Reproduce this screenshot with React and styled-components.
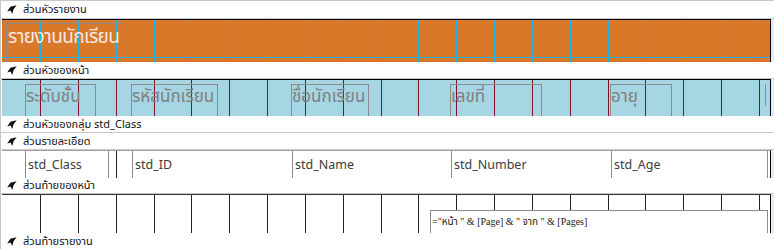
import React from "react";
import styled, { createGlobalStyle } from "styled-components";

const Global = createGlobalStyle`
  html, body { margin: 0; padding: 0; background: #ffffff; }
  #root { width: 774px; height: 249px; overflow: hidden; }
`;

const THAI = `"Noto Sans Thai", "Noto Sans", "DejaVu Sans", sans-serif`;

const Page = styled.div`
  width: 774px;
  height: 249px;
  box-sizing: border-box;
  border-top: 1px solid #c8c8c8;
  border-left: 1px solid #c8c8c8;
  display: flex;
  flex-direction: column;
  overflow: hidden;
  background: #fff;
`;

const Bar = styled.div`
  height: ${(p) => p.$h || 16}px;
  flex: none;
  display: flex;
  align-items: center;
  gap: 6px;
  padding-left: 6px;
  border-bottom: ${(p) => (p.$noLine ? "none" : "1px solid #c8c8c8")};
  font-family: ${THAI};
  font-size: 11px;
  color: #111;
  background: #fff;
  white-space: nowrap;
`;

const BandRow = styled.div`
  display: flex;
  flex: none;
  height: ${(p) => p.$h}px;
  padding-left: 1px;
  background: #fff;
`;

const Band = styled.div`
  position: relative;
  width: 769px;
  flex: none;
  box-sizing: border-box;
  border-top: 1px solid ${(p) => p.$top || "#000"};
  border-right: 1px solid #000;
  background: ${(p) => p.$bg};
  overflow: hidden;
`;

const Filler = styled.div`
  flex: 1;
  background: #e8ecf0;
`;

const VLine = styled.div`
  position: absolute;
  top: 0;
  bottom: 0;
  width: 1px;
  background: ${(p) => p.$c};
`;

const HLine = styled.div`
  position: absolute;
  left: 0;
  right: 0;
  height: 1px;
  background: ${(p) => p.$c};
`;

const xs = Array.from({ length: 20 }, (_, k) => Math.round(38 + 37.84 * k));

function Grid({ color, rows = [] }) {
  return (
    <>
      {xs.map((x) => (
        <VLine key={x} $c={color} style={{ left: x }} />
      ))}
      {rows.map((y) => (
        <HLine key={"h" + y} $c={color} style={{ top: y }} />
      ))}
    </>
  );
}

const Control = styled.div`
  position: absolute;
  box-sizing: border-box;
  white-space: nowrap;
`;

const TitleBox = styled(Control)`
  left: 4px;
  top: 3px;
  width: 118px;
  height: 60px;
  border: 1px solid #8a8a8a;
  font-family: ${THAI};
  font-size: 19px;
  letter-spacing: -0.6px;
  line-height: 27px;
  color: #f6e8e6;
  padding-left: 1px;
`;

const Label = styled(Control)`
  top: 4px;
  height: 50px;
  border: 1px solid #8c8c8c;
  font-family: ${THAI};
  font-size: 17px;
  line-height: 24px;
  color: #808080;
`;

const Field = styled(Control)`
  top: 0;
  bottom: 0;
  border-left: 1px solid #8c8c8c;
  border-right: ${(p) => (p.$closed ? "1px solid #8c8c8c" : "none")};
  background: #fff;
  font-family: "Noto Sans", "Open Sans", sans-serif;
  font-size: 12.5px;
  line-height: 27px;
  color: #3c3c3c;
  padding-left: 2px;
`;

const Sliver = styled(Control)`
  left: 763px;
  top: 4px;
  width: 1px;
  height: 22px;
  background: #8c8c8c;
`;

const FooterBox = styled(Control)`
  left: 428px;
  top: 15px;
  width: 338px;
  height: 40px;
  border: 1px solid #8c8c8c;
  background: #fff;
  font-family: "Liberation Serif", ${THAI};
  font-size: 10px;
  line-height: 22px;
  color: #1a1a1a;
  padding-left: 1px;
`;

function SectionIcon() {
  return (
    <svg width="10" height="9" viewBox="0 0 10 9">
      <path d="M9.6 0.2 L3.4 1.8 L0.2 6.4 L3.6 5.6 L5.2 8.9 L6.6 4.2 Z" fill="#111" />
    </svg>
  );
}

function SectionBar({ children, h, noLine }) {
  return (
    <Bar $h={h} $noLine={noLine}>
      <SectionIcon />
      <span>{children}</span>
    </Bar>
  );
}

const labels = [
  { t: "ระดับชั้น", l: 23, w: 71 },
  { t: "รหัสนักเรียน", l: 129, w: 87 },
  { t: "ชื่อนักเรียน", l: 289, w: 78 },
  { t: "เลขที่", l: 448, w: 92 },
  { t: "อายุ", l: 608, w: 62 },
];

const fields = [
  { t: "std_Class", l: 23, w: 84, closed: true },
  { t: "std_ID", l: 130, w: 161 },
  { t: "std_Name", l: 290, w: 160 },
  { t: "std_Number", l: 449, w: 160 },
  { t: "std_Age", l: 609, w: 157, closed: true },
];

export default function App() {
  return (
    <>
      <Global />
      <Page>
        <SectionBar h={17}>ส่วนหัวรายงาน</SectionBar>
        <BandRow $h={43}>
          <Band $bg="#d97828">
            <Grid color="#1ab4ec" rows={[37]} />
            <TitleBox>รายงานนักเรียน</TitleBox>
          </Band>
          <Filler />
        </BandRow>
        <SectionBar>ส่วนหัวของหน้า</SectionBar>
        <BandRow $h={37}>
          <Band $bg="#a6d5e3">
            <Grid color="#7a1426" />
            {labels.map((c) => (
              <Label key={c.t} style={{ left: c.l, width: c.w }}>
                {c.t}
              </Label>
            ))}
            <Sliver />
          </Band>
          <Filler />
        </BandRow>
        <SectionBar>ส่วนหัวของกลุ่ม std_Class</SectionBar>
        <SectionBar>ส่วนรายละเอียด</SectionBar>
        <BandRow $h={28}>
          <Band $bg="#fff" $top="#a0a0a0">
            <Grid color="#222" />
            {fields.map((c) => (
              <Field key={c.t} $closed={c.closed} style={{ left: c.l, width: c.w }}>
                {c.t}
              </Field>
            ))}
          </Band>
          <Filler />
        </BandRow>
        <SectionBar h={15}>ส่วนท้ายของหน้า</SectionBar>
        <BandRow $h={39}>
          <Band $bg="#fff" $top="#333">
            <Grid color="#222" />
            <FooterBox>="หน้า " &amp; [Page] &amp; " จาก " &amp; [Pages]</FooterBox>
          </Band>
          <Filler />
        </BandRow>
        <SectionBar h={17} noLine>ส่วนท้ายรายงาน</SectionBar>
      </Page>
    </>
  );
}
